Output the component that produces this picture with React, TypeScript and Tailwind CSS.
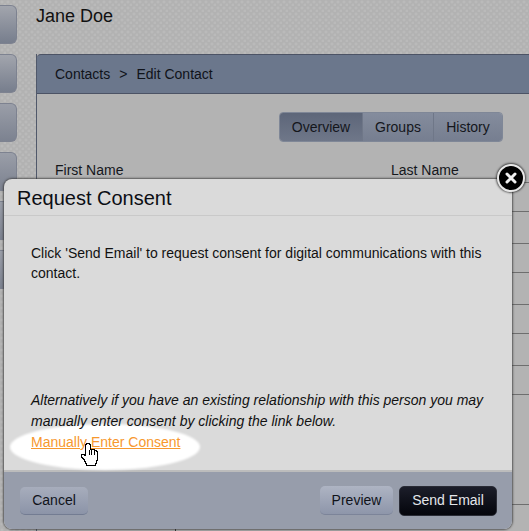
import React from 'react';

const rows = [
  { h: 'h-[29px]' },
  { h: 'h-[32px]' },
  { h: 'h-[29px]' },
  { h: 'h-[32px]' },
  { h: 'h-[29px]' },
  { h: 'h-[32px]' },
  { h: 'h-[29px]' },
  { h: 'h-[110px]' },
];

const SideTab = ({ muted }: { muted?: boolean }) => (
  <div
    className={
      'h-[39px] w-full shrink-0 rounded-r-[6px] border border-l-0 border-[#7d8290] bg-gradient-to-b ' +
      (muted ? 'from-[#9a9ea8] to-[#7c8290]' : 'from-[#a2a5ad] to-[#777e8d]')
    }
  />
);

const HandCursor = () => (
  <svg width="18" height="23" viewBox="0 0 18 23" className="absolute left-[76px] top-[227px]" shapeRendering="crispEdges">
    <path
      d="M5 1h1V0h3v1h1v5h4v1h2v1h1v9h-1v3h-1v2H6v-2H5v-2H4v-2H3v-1H2v-1H1v-3h3v1h1z"
      fill="#fff"
      stroke="#000"
      strokeWidth="1"
    />
    <path d="M9 7v5M11.500 7v5M14 8v4" stroke="#000" strokeWidth="1" fill="none" />
  </svg>
);

export default function App() {
  return (
    <div className="relative flex h-[531px] w-[529px] overflow-hidden bg-[#b2b2b2] bg-[radial-gradient(circle_at_2px_2px,#bababa_1px,transparent_2px),radial-gradient(circle_at_5px_5px,#bababa_1px,transparent_2px)] bg-[length:6px_6px] font-['Liberation_Sans',Arial,sans-serif] text-[14px] text-[#14161c]">
      {/* left nav */}
      <div className="flex h-[290px] w-[17px] shrink-0 flex-col gap-[10px] pt-[5px]">
        <SideTab />
        <SideTab />
        <SideTab muted />
        <SideTab muted />
        <SideTab muted />
        <SideTab muted />
      </div>

      <div className="ml-[19px] flex min-w-0 flex-1 flex-col">
        <div className="flex h-[54px] shrink-0 items-start pt-[6px] text-[18px] leading-[21px] text-[#111]">Jane Doe</div>

        {/* contact panel behind the dialog */}
        <div className="flex flex-1 flex-col border-l border-[#50586a] bg-[#b3b3b3]">
          <div className="flex h-[40px] shrink-0 items-center gap-[9px] rounded-tl-[4px] border-y border-[#4c5365] bg-[#6b778c] pl-[18px] text-[#10131a]">
            <span>Contacts</span>
            <span>&gt;</span>
            <span>Edit Contact</span>
          </div>
          <div className="mr-[26px] mt-[18px] flex h-[30px] w-[224px] shrink-0 self-end overflow-hidden rounded-[4px] border border-[#7f8797] text-[14px]">
            <div className="flex w-[83px] items-center justify-center border-r border-[#6f7788] bg-gradient-to-b from-[#5d6679] to-[#6f7789]">Overview</div>
            <div className="flex w-[71px] items-center justify-center border-r border-[#6f7788] bg-gradient-to-b from-[#848c9d] to-[#767e90]">Groups</div>
            <div className="flex flex-1 items-center justify-center bg-gradient-to-b from-[#848c9d] to-[#767e90]">History</div>
          </div>
          <div className="flex h-[40px] shrink-0 items-end pb-[1px] pl-[18px] text-[#15171c]">
            <span className="w-[336px]">First Name</span>
            <span>Last Name</span>
          </div>
          {rows.map((r, i) => (
            <div key={i} className={'shrink-0 border-t border-[#6e6e6e] ' + r.h} />
          ))}
          <div className="flex-1 border-t border-[#6e6e6e]">
            <div className="h-full w-[139px] border-r border-[#333]" />
          </div>
        </div>
      </div>

      {/* dialog */}
      <div className="absolute left-[4px] top-[179px] flex h-[350px] w-[508px] flex-col rounded-[8px] bg-[#dadada] shadow-[0_0_2px_1px_rgba(50,50,50,0.7)]">
        <div className="flex h-[37px] shrink-0 items-center border-b border-[#c9c9c9] pl-[13px] pt-[2px] text-[20px] leading-[23px] text-[#0c0e14]">
          Request Consent
        </div>
        <div className="relative flex flex-1 flex-col px-[27px] pt-[27px] text-[#111]">
          <p className="leading-[20px]">Click 'Send Email' to request consent for digital communications with this contact.</p>
          <div className="absolute left-[6px] top-[208px] h-[46px] w-[190px] rounded-[50%] bg-white blur-[1px]" />
          <p className="relative mt-auto italic leading-[21px]">
            Alternatively if you have an existing relationship with this person you may manually enter consent by clicking the link below.
          </p>
          <a className="relative mb-[18px] leading-[20px] text-[#f7982e] underline">Manually Enter Consent</a>
          <HandCursor />
        </div>
        <div className="flex h-[59px] shrink-0 items-center rounded-b-[8px] border-t-2 border-[#bcbcbc] bg-[#979dab] pl-[16px] pr-[15px]">
          <button className="h-[28px] w-[68px] rounded-[5px] border-b border-[#737c92] bg-gradient-to-b from-[#a7adbc] to-[#8c94a8] text-[#10131a]">Cancel</button>
          <button className="ml-auto h-[29px] w-[73px] rounded-[5px] border-b border-[#7c8499] bg-gradient-to-b from-[#aeb4c3] to-[#8e96aa] text-[#10131a]">Preview</button>
          <button className="ml-[6px] h-[30px] w-[98px] rounded-[5px] border border-[#2a2c36] bg-gradient-to-b from-[#1c1e2a] to-[#05060c] text-[#e4e6ea]">Send Email</button>
        </div>
      </div>

      {/* close button */}
      <button className="absolute left-[497px] top-[164px] flex h-[28px] w-[28px] items-center justify-center rounded-full border-2 border-[#e8e8e8] bg-black shadow-[0_0_2px_1px_rgba(0,0,0,0.6)]">
        <svg width="12" height="12" viewBox="0 0 12 12">
          <path d="M2 2l8 8M10 2l-8 8" stroke="#f0f0f0" strokeWidth="3" strokeLinecap="round" />
        </svg>
      </button>
    </div>
  );
}
